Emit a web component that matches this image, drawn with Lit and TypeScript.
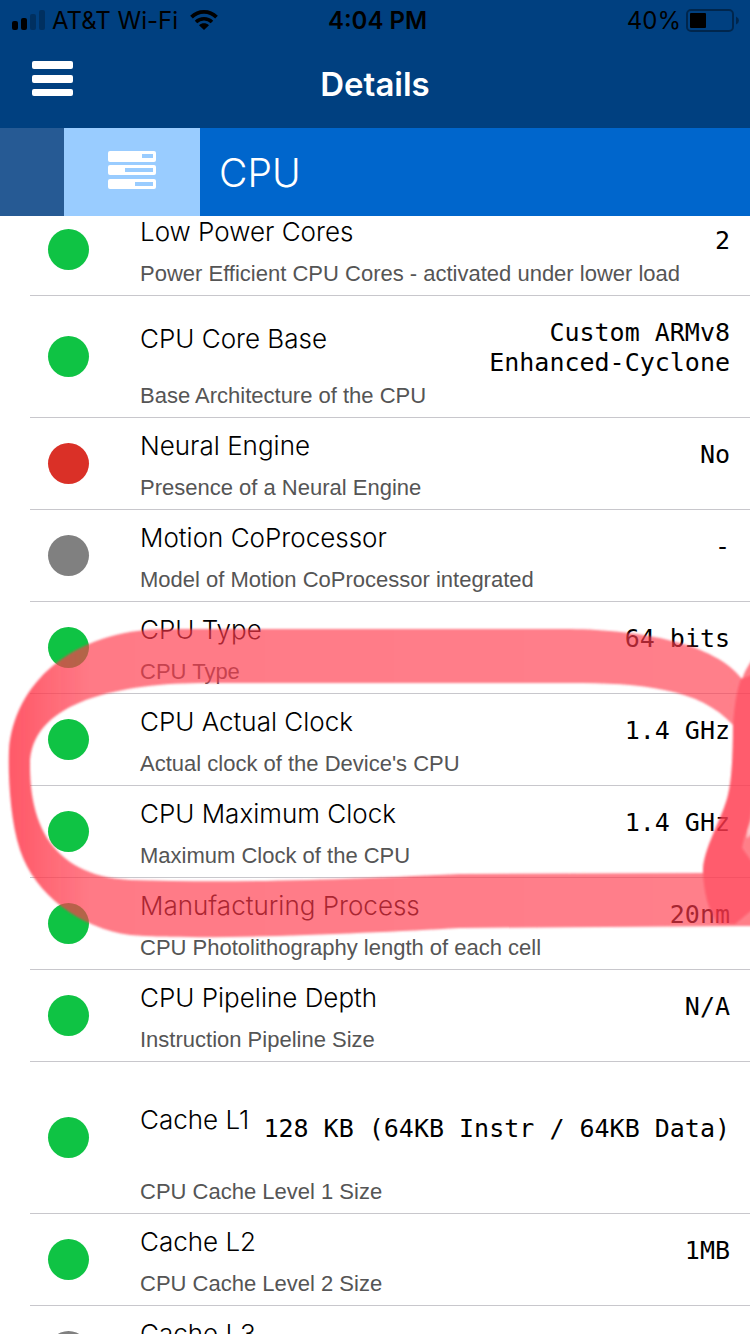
import { LitElement, html, css, svg, nothing } from "lit";
import { customElement, property } from "lit/decorators.js";

type Status = "yes" | "no" | "unknown";

interface Detail {
  title: string;
  value?: string;
  note?: string;
  status: Status;
  tall?: boolean;
}

const DETAILS: Detail[] = [
  { title: "Low Power Cores", value: "2", note: "Power Efficient CPU Cores - activated under lower load", status: "yes" },
  { title: "CPU Core Base", value: "Custom ARMv8\nEnhanced-Cyclone", note: "Base Architecture of the CPU", status: "yes" },
  { title: "Neural Engine", value: "No", note: "Presence of a Neural Engine", status: "no" },
  { title: "Motion CoProcessor", value: "-", note: "Model of Motion CoProcessor integrated", status: "unknown" },
  { title: "CPU Type", value: "64 bits", note: "CPU Type", status: "yes" },
  { title: "CPU Actual Clock", value: "1.4 GHz", note: "Actual clock of the Device's CPU", status: "yes" },
  { title: "CPU Maximum Clock", value: "1.4 GHz", note: "Maximum Clock of the CPU", status: "yes" },
  { title: "Manufacturing Process", value: "20nm", note: "CPU Photolithography length of each cell", status: "yes" },
  { title: "CPU Pipeline Depth", value: "N/A", note: "Instruction Pipeline Size", status: "yes" },
  { title: "Cache L1", value: "128 KB (64KB Instr / 64KB Data)", note: "CPU Cache Level 1 Size", status: "yes", tall: true },
  { title: "Cache L2", value: "1MB", note: "CPU Cache Level 2 Size", status: "yes" },
  { title: "Cache L3", status: "unknown" },
];

@customElement("status-bar")
class StatusBar extends LitElement {
  static styles = css`
    :host {
      display: grid;
      grid-template-columns: 1fr auto 1fr;
      align-items: center;
      height: 40px;
      padding: 0 11px 0 12px;
      font: 400 24px/30px Inter, sans-serif;
      color: #000;
    }
    .side { display: flex; align-items: center; }
    span { padding-top: 2px; }
    .carrier { margin: 0 12px 0 7px; }
    .clock { padding-left: 4px; font-weight: 600; }
    .end { justify-content: flex-end; gap: 5px; }
    svg { display: block; }
  `;
  render() {
    return html`
      <div class="side">
        <svg width="33" height="20" viewBox="0 0 33 20" aria-label="Signal">
          <rect x="0" y="11" width="6" height="9" rx="2" />
          <rect x="9" y="8" width="6" height="12" rx="2" />
          <rect x="18" y="4" width="6" height="16" rx="2" opacity=".25" />
          <rect x="27" y="0" width="6" height="20" rx="2" opacity=".25" />
        </svg>
        <span class="carrier">AT&amp;T Wi-Fi</span>
        <svg width="28" height="20" viewBox="0 0 28 20" aria-label="Wi-Fi">
          <path d="M1.500 7.200 C8.500 .2 19.500 .2 26.500 7.200" fill="none" stroke="#000" stroke-width="3.800" />
          <path d="M6 12 C10.500 7.700 17.500 7.700 22 12" fill="none" stroke="#000" stroke-width="3.600" />
          <path d="M9 15.300 C12 12.700 16 12.700 19 15.300 L14 20 Z" />
        </svg>
      </div>
      <span class="clock">4:04 PM</span>
      <div class="side end">
        <span>40%</span>
        <svg width="53" height="24" viewBox="0 0 53 24" aria-label="Battery">
          <rect x="1" y="2" width="46" height="21" rx="4" fill="none" stroke="#000" stroke-opacity=".4" stroke-width="2" />
          <rect x="4" y="5" width="16" height="15" rx="1" />
          <path d="M50 8.500 Q53 10 53 12.500 Q53 15 50 16.500 Z" fill-opacity=".4" />
        </svg>
      </div>
    `;
  }
}

@customElement("detail-row")
class DetailRow extends LitElement {
  @property({ attribute: false }) detail!: Detail;
  static styles = css`
    :host {
      display: grid;
      grid-template-columns: 110px 1fr;
      align-items: center;
      margin-left: 30px;
      border-bottom: 1px solid #c8c7cc;
    }
    .dot { width: 41px; height: 41px; margin-left: 18px; border-radius: 50%; }
    .yes { background: #0fc344; }
    .no { background: #da3027; }
    .unknown { background: #808080; }
    .head {
      display: grid;
      grid-template-columns: auto 1fr;
      align-items: center;
      padding-right: 20px;
    }
    .tall { min-height: 118px; }
    .title {
      margin: 0;
      padding-bottom: 2px;
      font: 300 26px/34px Inter, sans-serif;
      color: #000;
      white-space: nowrap;
    }
    .value {
      min-height: 30px;
      padding: 22px 0 6px;
      font: 400 25px/30px "DejaVu Sans Mono", monospace;
      color: #000;
      text-align: right;
      white-space: pre;
    }
    .note {
      min-height: 24px;
      margin: 0;
      padding-bottom: 9px;
      font: 400 22px/24px "Liberation Sans", Arial, sans-serif;
      color: #555;
    }
  `;
  render() {
    const d = this.detail;
    return html`
      <div class="dot ${d.status}"></div>
      <div>
        <div class="head ${d.tall ? "tall" : ""}">
          <h2 class="title">${d.title}</h2>
          <div class="value">${d.value ?? nothing}</div>
        </div>
        <p class="note">${d.note ?? nothing}</p>
      </div>
    `;
  }
}

const RING = svg`
  <path fill-rule="evenodd" d="M165 29 L570 29 C640 30 715 43 742 79 Q745 70 752 60 L752 326 L740 326 L460 328 C370 333 200 341 130 335 C80 328 35 295 20 250 C10 220 8 175 9 150 C14 85 70 30 165 29 Z
    M200 83 C110 84 30 105 30 165 C30 215 45 275 130 280 C250 284 370 278 460 274 L703 273 C702 250 722 220 728 195 Q733 175 733 125 C700 88 640 83 570 83 Z" />
`;

@customElement("app-root")
class AppRoot extends LitElement {
  static styles = css`
    :host {
      display: flex;
      flex-direction: column;
      position: relative;
      height: 100vh;
      overflow: hidden;
      background: #fff;
    }
    .top { flex: none; background: #004080; }
    .nav {
      display: grid;
      grid-template-columns: 1fr auto 1fr;
      align-items: center;
      height: 88px;
      padding: 0 32px;
    }
    .menu {
      justify-self: start;
      align-self: start;
      margin-top: 21px;
      padding: 0;
      border: 0;
      background: none;
    }
    .menu svg, .icon svg { display: block; }
    .heading {
      margin: 0;
      font: 600 33px/40px Inter, sans-serif;
      color: #fff;
    }
    .section {
      display: grid;
      flex: none;
      grid-template: 88px / 64px 136px 1fr;
      background: #0066cc;
    }
    .spacer { background: #265a94; }
    .icon {
      display: grid;
      place-items: center;
      background: #99ccff;
    }
    .name {
      margin: 0 0 0 19px;
      font: 300 39px/90px Inter, sans-serif;
      color: #fff;
    }
    .list { flex: 1; min-height: 0; overflow: hidden; }
    .rows { margin-top: -12px; }
    .marker {
      position: absolute;
      left: 0;
      top: 600px;
      width: 100%;
      height: 350px;
      pointer-events: none;
    }
  `;
  render() {
    return html`
      <header class="top">
        <status-bar></status-bar>
        <div class="nav">
          <button class="menu" aria-label="Menu">
            <svg width="42" height="36" viewBox="0 0 42 36" fill="#fff">
              <rect y="0" width="41" height="8" rx="2" />
              <rect y="14" width="41" height="8" rx="2" />
              <rect y="28" width="41" height="7" rx="2" />
            </svg>
          </button>
          <h1 class="heading">Details</h1>
        </div>
      </header>
      <div class="section">
        <div class="spacer"></div>
        <div class="icon">
          <svg width="48" height="42" viewBox="0 0 48 42">
            <g fill="#fff">
              <rect y="0" width="48" height="11" rx="2" />
              <rect y="14" width="48" height="10" rx="2" />
              <rect y="28" width="48" height="10" rx="2" />
            </g>
            <g fill="#99ccff">
              <rect x="34" y="3" width="11" height="4" />
              <rect x="17" y="17" width="28" height="4" />
              <rect x="27" y="31" width="18" height="4" />
            </g>
          </svg>
        </div>
        <h2 class="name">CPU</h2>
      </div>
      <main class="list">
        <div class="rows">
          ${DETAILS.map((d) => html`<detail-row .detail=${d}></detail-row>`)}
        </div>
      </main>
      <svg class="marker" viewBox="0 0 750 350" preserveAspectRatio="none" aria-hidden="true">
        <defs>
          <filter id="soft" x="-5%" y="-5%" width="110%" height="110%"><feGaussianBlur stdDeviation="1" /></filter>
          <linearGradient id="ink" x1="0" x2="750" y1="0" y2="0" gradientUnits="userSpaceOnUse">
            <stop offset="0.020" stop-color="#ff394b" stop-opacity="0.830" />
            <stop offset="0.120" stop-color="#ff394b" stop-opacity="0.670" />
            <stop offset="1" stop-color="#ff394b" stop-opacity="0.650" />
          </linearGradient>
        </defs>
        <g filter="url(#soft)">
          <g fill="url(#ink)">${RING}</g>
          <path fill="#ff394b" fill-opacity=".48" d="M741 79 L752 75 L752 205 C750 225 744 235 742 248 L752 262 L752 310 L735 324 L718 324 C708 310 704 292 703 273 C702 250 722 220 728 195 Q733 175 733 125 Q735 95 741 79 Z" />
          <path fill="#fff" fill-opacity=".6" d="M753 216 L748 230 L747 238 L753 232 Z" />
        </g>
      </svg>
    `;
  }
}
